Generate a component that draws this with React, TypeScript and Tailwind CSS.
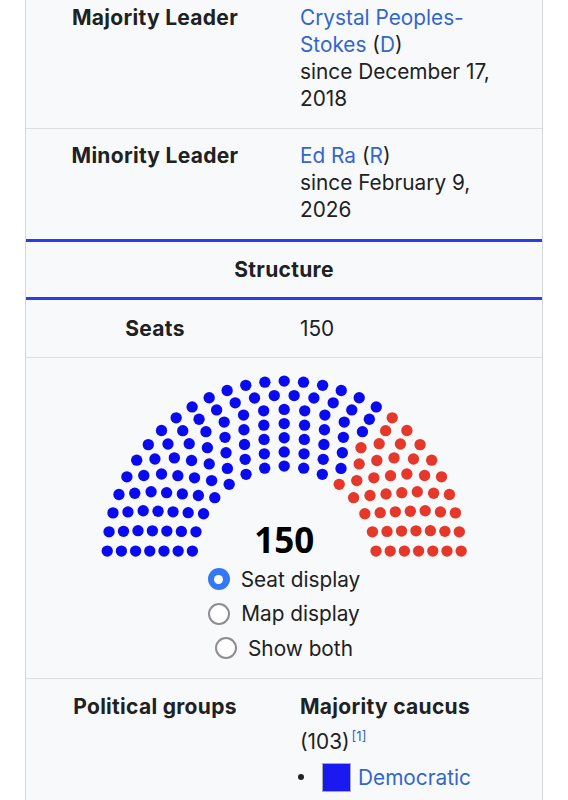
import React from "react";

const SCALE = 184.2;
const NROWS = 7;
const SEATS = [
  { name: "Democratic", count: 103, color: "#0a0af0" },
  { name: "Republican", count: 47, color: "#e5372a" },
];

type Seat = { x: number; y: number; angle: number };

// seat layout after the usual parliament arch rules
function seatCenters(total: number): Seat[] {
  const rad = 1 / (4 * NROWS - 2);
  const maxed: number[] = [];
  for (let r = 0; r < NROWS; r++) {
    const R = 0.5 + 2 * r * rad;
    maxed.push(Math.floor((Math.PI * R) / (2 * rad)));
  }
  const ratio = total / maxed.reduce((a, b) => a + b, 0);
  const out: Seat[] = [];
  for (let r = 0; r < NROWS; r++) {
    const n = r === NROWS - 1 ? total - out.length : Math.round(ratio * maxed[r]);
    const R = 0.5 + 2 * r * rad;
    const margin = Math.asin(rad / R);
    const step = (Math.PI - 2 * margin) / (n - 1);
    for (let s = 0; s < n; s++) {
      const a = margin + s * step;
      out.push({ x: 1 + R * Math.cos(a), y: R * Math.sin(a), angle: a });
    }
  }
  return out.sort((p, q) => q.angle - p.angle);
}

function SeatChart() {
  const seats = seatCenters(150);
  const r = (0.8 / (4 * NROWS - 2)) * SCALE;
  const colors: string[] = [];
  SEATS.forEach((p) => {
    for (let i = 0; i < p.count; i++) colors.push(p.color);
  });
  return (
    <svg
      width={2 * SCALE}
      height={SCALE}
      viewBox={`0 0 ${2 * SCALE} ${SCALE}`}
      overflow="visible"
    >
      {seats.map((s, i) => (
        <circle
          key={i}
          cx={s.x * SCALE}
          cy={(1 - s.y) * SCALE}
          r={r}
          fill={colors[i]}
        />
      ))}
      <text
        x={SCALE}
        y={SCALE - 5}
        textAnchor="middle"
        fontSize="35"
        fontWeight="700"
        fontFamily="'Noto Sans', sans-serif"
        fill="#000"
      >
        150
      </text>
    </svg>
  );
}

function Radio({ checked, label }: { checked?: boolean; label: string }) {
  return (
    <label className="flex h-[34.5px] items-center justify-center gap-[11px]">
      {checked ? (
        <span className="flex h-[22px] w-[22px] items-center justify-center rounded-full bg-[#3478f6]">
          <span className="h-[9px] w-[9px] rounded-full bg-white" />
        </span>
      ) : (
        <span className="h-[22px] w-[22px] rounded-full border-2 border-[#8d8d92] bg-white" />
      )}
      <span>{label}</span>
    </label>
  );
}

const link = "text-[#3366cc]";
const label = "text-center text-[21px] font-bold tracking-[0.3px]";
const data = "w-[222px] pl-[16px]";

export default function App() {
  return (
    <div className="min-h-screen bg-white">
      <div
        className="ml-[25px] w-[518px] border-x border-[#d4d7dc] bg-[#f8f9fa] text-[20.8px] leading-[27px] text-[#202122]"
        style={{ fontFamily: "Inter, 'Noto Sans', sans-serif" }}
      >
        <div className="grid grid-cols-[258px_1fr] border-b border-[#dcdfe3] pb-[16px] pt-[4px]">
          <div className={label}>Majority Leader</div>
          <div className={data}>
            <span className={link}>Crystal Peoples-Stokes</span> (<span className={link}>D</span>)
            <br />
            since December 17, 2018
          </div>
        </div>

        <div className="grid grid-cols-[258px_1fr] border-b-[3px] border-[#2d3de6] pb-[16px] pt-[13px]">
          <div className={label}>Minority Leader</div>
          <div className={data}>
            <span className={link}>Ed Ra</span> (<span className={link}>R</span>)
            <br />
            since February 9, 2026
          </div>
        </div>

        <div className="border-b-[3px] border-[#2d3de6] py-[14px] text-center text-[21px] font-bold tracking-[0.3px]">
          Structure
        </div>

        <div className="grid grid-cols-[258px_1fr] border-b border-[#dcdfe3] py-[15px]">
          <div className={label}>Seats</div>
          <div className={data}>150</div>
        </div>

        <div className="flex flex-col items-center border-b border-[#dcdfe3] pb-[12px] pt-[16px]">
          <SeatChart />
          <div className="mt-[4px] flex flex-col">
            <Radio checked label="Seat display" />
            <Radio label="Map display" />
            <Radio label="Show both" />
          </div>
        </div>

        <div className="grid grid-cols-[258px_1fr] pb-[60px] pt-[14px]">
          <div className={label}>Political groups</div>
          <div className={data}>
            <div className="text-[21px] font-bold tracking-[0.3px]">Majority caucus</div>
            <div className="mt-[8px]">
              (103)
              <sup className={`${link} relative top-[1px] ml-[2px] align-top text-[13px] leading-[14px]`}>
                [1]
              </sup>
            </div>
            <ul className="mt-[8px]">
              <li className="flex h-[29px] items-center">
                <span className="ml-[-2px] h-[6px] w-[6px] rounded-full bg-[#202122]" />
                <span className="ml-[18px] h-[29px] w-[29px] border border-[#a2a9b1] bg-[#1a1af0]" />
                <span className={`${link} ml-[7px]`}>Democratic</span>
              </li>
            </ul>
          </div>
        </div>
      </div>
    </div>
  );
}
